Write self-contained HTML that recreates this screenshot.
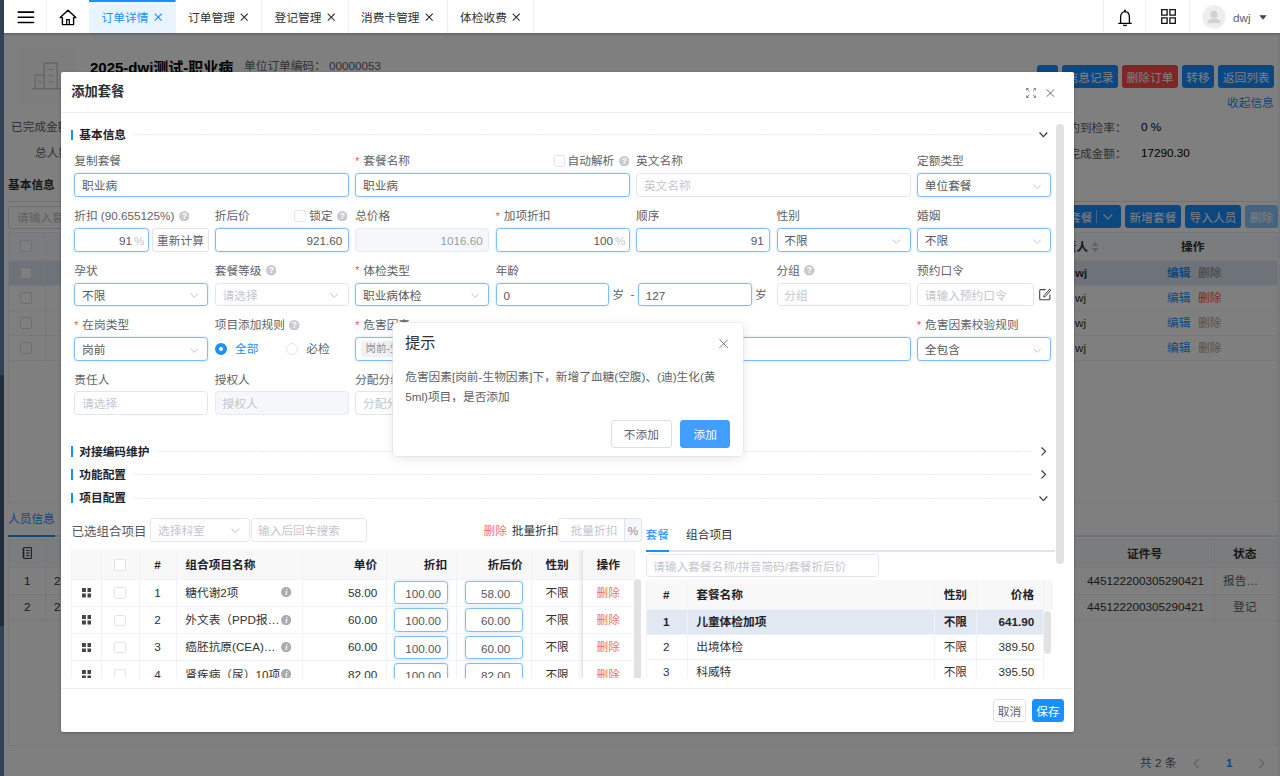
<!DOCTYPE html>
<html lang="zh-CN">
<head>
<meta charset="utf-8">
<title>订单详情</title>
<style>
*{box-sizing:border-box;margin:0;padding:0}
html,body{width:1280px;height:776px;overflow:hidden;background:#fff}
body{font-family:"Liberation Sans","Noto Sans CJK SC",sans-serif;font-size:12px;color:#303133;position:relative}
.abs{position:absolute}
svg{display:block}
/* ---------- sidebar strip ---------- */
#side{position:absolute;left:0;top:0;width:4px;height:776px;background:#304158}
#side i{position:absolute;left:0;top:375px;width:4px;height:251px;background:#1f2d3f}
/* ---------- top bar ---------- */
#top{position:absolute;left:4px;top:0;width:1276px;height:33px;background:#fff;z-index:50;box-shadow:0 1px 1.5px rgba(0,0,0,.22)}
#top .vl{position:absolute;top:0;width:1px;height:32px;background:#f0f0f0}
.tab{position:absolute;top:0;height:33px;line-height:36px;font-size:11.7px;color:#303133;padding-left:12.6px;border-right:1px solid #f0f0f0;white-space:nowrap}
.tab .x{position:absolute;top:13.3px;width:8.4px;height:8.4px}
.tab.on{background:#e8f4ff;color:#1890ff;border-top:2px solid #1890ff;line-height:32px}
.tab.on .x{top:11.3px}
/* ---------- background page ---------- */
#page{position:absolute;left:4px;top:33px;width:1276px;height:743px;background:#fff;overflow:hidden}
#mask{position:absolute;left:4px;top:33px;width:1276px;height:743px;background:rgba(0,0,0,.5);z-index:10}

/* page content (coordinates relative to #page at 4,33) */
#page .t{position:absolute;white-space:nowrap;line-height:16px;font-size:11.7px;color:#303133}
#page .btn{position:absolute;top:32px;height:23px;border-radius:3px;background:#1890ff;color:#fff;font-size:11.7px;line-height:25.6px;text-align:center;white-space:nowrap}
#page .hl{position:absolute;height:1px;background:#ebeef5}
#page .vl2{position:absolute;width:1px;background:#ebeef5}
#page .cb{position:absolute;left:16px;width:12px;height:12px;border:1px solid #dcdfe6;border-radius:2px;background:#fff}
#page .ed{color:#1890ff}
#page .dl{color:#a0a3a8}
/* ---------- modal ---------- */
#modal{position:absolute;left:61px;top:72px;width:1013.4px;height:660px;background:#fff;border-radius:2px;z-index:20;box-shadow:0 1px 3px rgba(0,0,0,.3)}
#modal .mh{position:absolute;left:0;top:0;width:100%;height:41px;border-bottom:1px solid #f0f0f0}
#modal .mh b{position:absolute;left:10.2px;top:11.3px;font-size:13.3px;line-height:18px;color:#2b2e33}
#modal .mf{position:absolute;left:0;top:616px;width:100%;height:41px;border-top:1px solid #f0f0f0}

#modal .lb{position:absolute;white-space:nowrap;font-size:11.7px;line-height:16px;color:#606266}
#modal .rq{color:#ff4d4f;font-style:normal;margin-right:4px;font-size:10.5px;position:relative;top:-0.5px}
#modal .st{position:absolute;white-space:nowrap;font-size:11.7px;line-height:16px;font-weight:bold;color:#1f2329}
#modal .bar{position:absolute;width:2px;height:10.5px;background:#1890ff}
#modal .dot{position:absolute;height:1px;background:repeating-linear-gradient(to right,#e7e9ec 0,#e7e9ec 1.9px,rgba(255,255,255,0) 1.9px,rgba(255,255,255,0) 2.8px)}
#modal .in{position:absolute;border:1px solid #e2e5eb;border-radius:3.5px;background:#fff;font-size:11.7px;color:#55585e;white-space:nowrap;overflow:hidden}
#modal .in.a{border-color:#7dbdff;box-shadow:0 0 2.5px rgba(64,158,255,.35)}
#modal .in.d{background:#f5f7fa;border-color:#e6e9ef;color:#9b9ea4}
#modal .in .ph{color:#c3c6ce}
#modal .in em{position:absolute;right:3.4px;top:0;font-style:normal;color:#c3c6ce}
#modal .bt{position:absolute;border:1px solid #dfe2e8;border-radius:3px;background:#fff;font-size:11.7px;color:#606266;text-align:center;white-space:nowrap}
#modal .cb{position:absolute;width:11.5px;height:11.5px;border:1px solid #e3e6ec;border-radius:2px;background:#fff}
#modal .rd{position:absolute;width:12px;height:12px;border:1px solid #e2e5eb;border-radius:50%;background:#fff}
#modal .rd.on{border:4px solid #1890ff}
#modal .tag{position:absolute;height:15.8px;line-height:15.8px;padding:0 5px;background:#f1f2f4;border-radius:3px;font-size:10.4px;color:#909399;white-space:nowrap}
#modal .sb{position:absolute;border-radius:4px;background:#e2e2e2}

#modal .tb{position:absolute;overflow:hidden}
#modal .tb .th{position:absolute;background:#f8f8f9}
#modal .tb .hi{position:absolute;background:#e1e8f2}
#modal .tb .hl{position:absolute;height:1px;background:#f0f2f7}
#modal .tb .vl{position:absolute;width:1px;background:#f0f2f7}
#modal .tb .fx{position:absolute;width:6px;background:linear-gradient(to right,rgba(0,0,0,0),rgba(0,0,0,.07))}
#modal .tb .c{position:absolute;white-space:nowrap;font-size:11.7px;line-height:16px;color:#303133;padding:0 9px}
#modal .tb .c.b{font-weight:bold;color:#1f2329}
#modal .tb .c.rd2{color:#f56c6c}

/* ---------- message box ---------- */
#dlg{position:absolute;left:393px;top:323px;width:350px;height:133px;background:#fff;border-radius:4px;z-index:30;box-shadow:0 2px 12px rgba(0,0,0,.1),0 0 0 1px rgba(235,238,245,.6)}
#dlg .dt{position:absolute;left:12px;top:9.4px;font-size:15.3px;line-height:22px;color:#303133}
#dlg .dc{position:absolute;left:12.2px;top:44.4px;font-size:11.7px;line-height:20px;color:#606266;white-space:nowrap}
#dlg .db{position:absolute;top:97px;height:27.6px;line-height:27px;border:1px solid #dcdfe6;border-radius:3px;background:#fff;font-size:11.7px;color:#606266;text-align:center}
#dlg .db.pr{background:#409eff;border-color:#409eff;color:#fff}
</style>
</head>
<body>
<div id="side"><i></i></div>

<!-- TOPBAR -->
<div id="top">
  <svg class="abs" style="left:13px;top:11px" width="18" height="13" viewBox="0 0 18 13"><path d="M1.2 1.1H16.6M1.2 6.2H16.6M1.2 11.4H16.6" stroke="#000" stroke-width="1.55" stroke-linecap="round"/></svg>
  <div class="vl" style="left:42px"></div>
  <svg class="abs" style="left:55px;top:9px" width="18" height="17" viewBox="0 0 18 17"><path d="M1.2 8.6L9 1.2L16.8 8.6H14.6V15.6H3.4V8.6Z" fill="none" stroke="#000" stroke-width="1.4" stroke-linejoin="round"/><path d="M7.7 15.6V10.6H10.3V15.6" fill="none" stroke="#000" stroke-width="1.2"/></svg>
  <div class="tab on" style="left:85px;width:87px">订单详情<svg class="x" viewBox="0 0 9 9" style="left:64.6px"><path d="M0.8 0.8L8.2 8.2M8.2 0.8L0.8 8.2" stroke="currentColor" stroke-width="1.15" fill="none"/></svg></div>
  <div class="tab" style="left:171.5px;width:86.5px">订单管理<svg class="x" viewBox="0 0 9 9" style="left:64.6px"><path d="M0.8 0.8L8.2 8.2M8.2 0.8L0.8 8.2" stroke="currentColor" stroke-width="1.15" fill="none"/></svg></div>
  <div class="tab" style="left:258px;width:86.5px">登记管理<svg class="x" viewBox="0 0 9 9" style="left:64.6px"><path d="M0.8 0.8L8.2 8.2M8.2 0.8L0.8 8.2" stroke="currentColor" stroke-width="1.15" fill="none"/></svg></div>
  <div class="tab" style="left:344.5px;width:99px">消费卡管理<svg class="x" viewBox="0 0 9 9" style="left:76.6px"><path d="M0.8 0.8L8.2 8.2M8.2 0.8L0.8 8.2" stroke="currentColor" stroke-width="1.15" fill="none"/></svg></div>
  <div class="tab" style="left:443.5px;width:86.5px">体检收费<svg class="x" viewBox="0 0 9 9" style="left:64.6px"><path d="M0.8 0.8L8.2 8.2M8.2 0.8L0.8 8.2" stroke="currentColor" stroke-width="1.15" fill="none"/></svg></div>
  <div class="vl" style="left:1099px"></div>
  <div class="vl" style="left:1141px"></div>
  <div class="vl" style="left:1185px"></div>
  <svg class="abs" style="left:1114px;top:9px" width="14" height="18" viewBox="0 0 14 18"><path d="M2.6 14.2V8.2C2.6 4.6 4.4 2.6 7 2.6S11.4 4.6 11.4 8.2V14.2" fill="none" stroke="#000" stroke-width="1.3"/><path d="M0.8 14.4H13.2" stroke="#000" stroke-width="1.3" stroke-linecap="round"/><path d="M7 1.2V2.6" stroke="#000" stroke-width="1.6" stroke-linecap="round"/><path d="M5.4 15.8C5.8 17 8.2 17 8.6 15.8" fill="none" stroke="#000" stroke-width="1.2"/></svg>
  <svg class="abs" style="left:1157px;top:9px" width="15" height="15" viewBox="0 0 15 15"><path d="M0.7 0.7H6.1V6.1H0.7ZM8.9 0.7H14.3V6.1H8.9ZM0.7 8.9H6.1V14.3H0.7ZM8.9 8.9H14.3V14.3H8.9Z" fill="none" stroke="#111" stroke-width="1.3"/></svg>
  <svg class="abs" style="left:1198px;top:5px" width="24" height="24" viewBox="0 0 24 24"><circle cx="12" cy="12" r="11.7" fill="#eee"/><circle cx="12" cy="9.4" r="3.6" fill="#d2d2d2"/><path d="M5.5 18.2C6 14.6 9 13.6 12 13.6S18 14.6 18.5 18.2Z" fill="#d2d2d2"/></svg>
  <div class="abs" style="left:1229px;top:10px;font-size:11.7px;line-height:15px;color:#606266">dwj</div>
  <svg class="abs" style="left:1255px;top:15px" width="8" height="5" viewBox="0 0 8 5"><path d="M0.3 0.3H7.7L4 4.7Z" fill="#444"/></svg>
</div>

<!-- PAGE -->
<div id="page">
  <div class="abs" style="left:1273.6px;top:0;width:3px;height:743px;background:#f0f2f5"></div>
  <div class="abs" style="left:0;top:0;width:1276px;height:3.4px;background:#f2f3f6"></div>
  <div class="abs" style="left:14px;top:14px;width:58px;height:58px;background:#fafbfc"></div>
  <svg class="abs" style="left:28px;top:29px" width="30" height="28" viewBox="0 0 30 28"><path d="M0 26.6H30M3.2 26.6V13.2H12.2M12.2 26.6V1H25.2V26.6" fill="none" stroke="#c6cbd6" stroke-width="1.3"/><path d="M16.6 7.6H20.8M16.6 13.6H20.8M16.6 19.6H20.8M5.8 19.6H9.8" stroke="#c6cbd6" stroke-width="1.3"/></svg>
  <div class="t" style="left:86px;top:24.5px;font-size:15px;line-height:20px;font-weight:bold;color:#000">2025-dwj测试-职业病</div>
  <div class="t" style="left:240px;top:25px;color:#606266">单位订单编码：&nbsp;00000053</div>
  <div class="btn" style="left:1033px;width:21px"></div>
  <div class="btn" style="left:1058px;width:56px">信息记录</div>
  <div class="btn" style="left:1118px;width:56px;background:#ff4d4f">删除订单</div>
  <div class="btn" style="left:1178px;width:32px">转移</div>
  <div class="btn" style="left:1214px;width:56.3px">返回列表</div>
  <div class="t ed" style="left:1223px;top:62px">收起信息</div>
  <div class="t" style="left:7px;top:86px;color:#606266">已完成金额：</div>
  <div class="t" style="left:31px;top:112px;color:#606266">总人数：</div>
  <div class="t" style="left:1052.5px;top:86.6px;color:#606266">预约到检率：</div>
  <div class="t" style="left:1137px;top:86px;color:#000">0 %</div>
  <div class="t" style="left:1052.5px;top:112.6px;color:#606266">已完成金额：</div>
  <div class="t" style="left:1137px;top:112px;color:#000">17290.30</div>
  <div class="t" style="left:4px;top:144px;font-weight:bold;color:#303133">基本信息</div>
  <div class="hl" style="left:4px;top:168px;width:1270px;background:#dfe4ed"></div>
  <div class="abs" style="left:4px;top:173px;width:150px;height:23px;border:1px solid #dcdfe6;border-radius:3px"></div>
  <div class="t" style="left:13px;top:177px;color:#c0c4cc">请输入套餐名称</div>
  <div class="btn" style="left:1040px;top:172px;width:77px;text-align:left;padding-left:25px">套餐<i style="position:absolute;left:51.5px;top:5px;width:1px;height:13px;background:rgba(255,255,255,.5)"></i><svg class="abs" style="left:59.4px;top:9px" width="9.8" height="5.8" viewBox="0 0 9.8 5.8"><path d="M0.6 0.6L4.9 5L9.2 0.6" fill="none" stroke="#fff" stroke-width="1.1"/></svg></div>
  <div class="btn" style="left:1121px;top:172px;width:56px">新增套餐</div>
  <div class="btn" style="left:1181px;top:172px;width:56px">导入人员</div>
  <div class="btn" style="left:1241px;top:172px;width:33px;background:#8cc8ff">删除</div>
  <!-- table 1 -->
  <div class="abs" style="left:4px;top:199px;width:1270px;height:271px;border:1px solid #ebeef5"></div>
  <div class="abs" style="left:5px;top:200px;width:1268px;height:28px;background:#f7f8fa;border-bottom:1px solid #eef0f5"></div>
  <div class="cb" style="top:207px"></div>
  <div class="t" style="left:1049px;top:206px;font-weight:bold">负责人</div>
  <svg class="abs" style="left:1087px;top:208px" width="8" height="12" viewBox="0 0 8 12"><path d="M0.3 5L4 0.8L7.7 5ZM0.3 7L4 11.2L7.7 7Z" fill="#c0c4cc"/></svg>
  <div class="t" style="left:1177px;top:206px;font-weight:bold">操作</div>
<div class="abs" style="left:5px;top:228px;width:1268px;height:25px;background:#dde7f5;border-bottom:1px solid #eef0f5"></div><div class="cb" style="top:234px"></div><div class="t" style="left:1071px;top:232px;font-weight:bold">wj</div><div class="t ed" style="left:1163px;top:232px;font-weight:bold">编辑</div><div class="t" style="left:1194px;top:232px;color:#a0a3a8;font-weight:bold">删除</div>
<div class="abs" style="left:5px;top:253px;width:1268px;height:25px;border-bottom:1px solid #eef0f5"></div><div class="cb" style="top:259px"></div><div class="t" style="left:1071px;top:257px">wj</div><div class="t ed" style="left:1163px;top:257px">编辑</div><div class="t" style="left:1194px;top:257px;color:#ff4d4f">删除</div>
<div class="abs" style="left:5px;top:278px;width:1268px;height:25px;border-bottom:1px solid #eef0f5"></div><div class="cb" style="top:284px"></div><div class="t" style="left:1071px;top:282px">wj</div><div class="t ed" style="left:1163px;top:282px">编辑</div><div class="t" style="left:1194px;top:282px;color:#a0a3a8">删除</div>
<div class="abs" style="left:5px;top:303px;width:1268px;height:25px;border-bottom:1px solid #eef0f5"></div><div class="cb" style="top:309px"></div><div class="t" style="left:1071px;top:307px">wj</div><div class="t ed" style="left:1163px;top:307px">编辑</div><div class="t" style="left:1194px;top:307px;color:#a0a3a8">删除</div>
  <div class="vl2" style="left:41px;top:200px;height:129px"></div>
  <!-- tab 2 -->
  <div class="t ed" style="left:4px;top:478px;color:#1890ff">人员信息</div>
  <div class="hl" style="left:4px;top:502px;width:1270px;height:2px;background:#dfe4ed"></div>
  <div class="hl" style="left:4px;top:502px;width:47px;height:2px;background:#1890ff"></div>
  <!-- table 2 -->
  <div class="abs" style="left:4px;top:506px;width:1270px;height:207px;border:1px solid #ebeef5"></div>
  <div class="abs" style="left:5px;top:507px;width:1268px;height:28px;background:#f7f8fa;border-bottom:1px solid #eef0f5"></div>
  <div class="abs" style="left:5px;top:535px;width:1268px;height:27px;border-bottom:1px solid #eef0f5"></div>
  <div class="abs" style="left:5px;top:562px;width:1268px;height:26px;border-bottom:1px solid #eef0f5"></div>
  <div class="vl2" style="left:41px;top:507px;height:81px"></div>
  <div class="vl2" style="left:1210px;top:507px;height:81px"></div>
  <svg class="abs" style="left:18px;top:514px" width="10" height="12" viewBox="0 0 10 12"><path d="M1.6 0.6H9.4V11.4H1.6ZM0 3H2.6M0 6H2.6M0 9H2.6M4.2 3.4H7.6M4.2 6H7.6M4.2 8.6H7.6" fill="none" stroke="#303133" stroke-width="1"/></svg>
  <div class="t" style="left:1123px;top:513px;font-weight:bold">证件号</div>
  <div class="t" style="left:1229px;top:513px;font-weight:bold">状态</div>
  <div class="t" style="left:20px;top:540px">1</div><div class="t" style="left:50px;top:540px">2</div>
  <div class="t" style="left:20px;top:566px">2</div><div class="t" style="left:50px;top:566px">2</div>
  <div class="t" style="left:1083px;top:540px">445122200305290421</div>
  <div class="t" style="left:1083px;top:566px">445122200305290421</div>
  <div class="t" style="left:1219px;top:540px;color:#606266">报告…</div>
  <div class="t" style="left:1229px;top:566px;color:#606266">登记</div>
  <!-- pagination -->
  <div class="t" style="left:1136px;top:722px;color:#606266">共 2 条</div>
  <svg class="abs" style="left:1189.4px;top:725.4px" width="7" height="11" viewBox="0 0 7 11"><path d="M5.6 0.8L1.2 5.5L5.6 10.2" fill="none" stroke="#c0c4cc" stroke-width="1.2"/></svg>
  <div class="t" style="left:1222px;top:722px;color:#1890ff;font-weight:bold">1</div>
  <svg class="abs" style="left:1254px;top:725px" width="7" height="11" viewBox="0 0 7 11"><path d="M1.4 0.8L5.8 5.5L1.4 10.2" fill="none" stroke="#c0c4cc" stroke-width="1.2"/></svg>
</div>

<div id="mask"></div>

<!-- MODAL -->
<div id="modal">
  <div class="mh"><b>添加套餐</b>
    <svg class="abs" style="left:965px;top:16px" width="10.4" height="10" viewBox="0 0 10.4 10"><path d="M0.6 0.6L3.4 3.2M0.6 0.6H2.8M0.6 0.6V2.6M9.8 0.6L7 3.2M9.8 0.6H7.6M9.8 0.6V2.6M0.6 9.4L3.4 6.8M0.6 9.4H2.8M0.6 9.4V7.4M9.8 9.4L7 6.8M9.8 9.4H7.6M9.8 9.4V7.4" fill="none" stroke="#74777d" stroke-width="0.9"/></svg>
    <svg class="abs" style="left:985.4px;top:17px" width="8.8" height="8.2" viewBox="0 0 8.8 8.2"><path d="M0.4 0.3L8.4 7.9M8.4 0.3L0.4 7.9" fill="none" stroke="#606266" stroke-width="0.9"/></svg>
  </div>
  <div class="mb" id="mb">
<!--FORM-START-->
<i class="bar" style="left:10.25px;top:57.5px"></i>
<div class="st" style="left:18.3px;top:55.1px">基本信息</div>
<i class="dot" style="left:71.5px;top:62.2px;width:898.5px"></i>
<svg class="abs" style="left:978.3px;top:60.4px" width="8.8" height="5.2" viewBox="0 0 8.8 5.2"><path d="M0.5 0.5L4.4 4.6000000000000005L8.3 0.5" fill="none" stroke="#303133" stroke-width="1.1"/></svg>
<div class="lb" style="left:13.25px;top:81.4px;color:#606266">复制套餐</div>
<div class="in a" style="left:13.25px;top:101px;width:274.56px;height:23.75px;line-height:24.15px;text-align:left;padding:0 6.8px;"><span class="">职业病</span></div>
<div class="lb" style="left:294.17px;top:81.4px;color:#606266"><i class="rq">*</i>套餐名称</div>
<div class="in a" style="left:294.17px;top:101px;width:274.56px;height:23.75px;line-height:24.15px;text-align:left;padding:0 6.8px;"><span class="">职业病</span></div>
<i class="cb" style="left:492.5px;top:83.4px"></i>
<div class="lb" style="left:506.5px;top:81.4px;color:#606266">自动解析</div>
<svg class="abs" style="left:557.7px;top:83.95px" width="10.5" height="10.5" viewBox="0 0 12 12"><circle cx="6" cy="6" r="6" fill="#c8cad0"/><text x="6" y="9.5" font-size="9.8" font-weight="bold" text-anchor="middle" fill="#fff" font-family="Liberation Sans, sans-serif">?</text></svg>
<div class="lb" style="left:575.09px;top:81.4px;color:#606266">英文名称</div>
<div class="in" style="left:575.09px;top:101px;width:274.56px;height:23.75px;line-height:24.15px;text-align:left;padding:0 6.8px;"><span class="ph">英文名称</span></div>
<div class="lb" style="left:856.01px;top:81.4px;color:#606266">定额类型</div>
<div class="in a" style="left:856.01px;top:101px;width:134.1px;height:23.75px;line-height:24.15px;text-align:left;padding:0 6.8px;"><span class="">单位套餐</span></div>
<svg class="abs" style="left:971.51px;top:111.78px" width="8.5" height="5" viewBox="0 0 8.5 5"><path d="M0.5 0.5L4.25 4.4L8.0 0.5" fill="none" stroke="#c0c4cc" stroke-width="1"/></svg>
<div class="lb" style="left:13.25px;top:136.1px;color:#606266">折扣 (90.655125%)</div>
<svg class="abs" style="left:117.6px;top:138.65px" width="10.5" height="10.5" viewBox="0 0 12 12"><circle cx="6" cy="6" r="6" fill="#c8cad0"/><text x="6" y="9.5" font-size="9.8" font-weight="bold" text-anchor="middle" fill="#fff" font-family="Liberation Sans, sans-serif">?</text></svg>
<div class="in a" style="left:13.25px;top:156px;width:74.5px;height:23.75px;line-height:24.15px;text-align:right;padding:0 15.8px;"><span class="">91</span><em>%</em></div>
<div class="bt" style="left:91.2px;top:156px;width:56.6px;height:23.75px;line-height:24.6px">重新计算</div>
<div class="lb" style="left:153.71px;top:136.1px;color:#606266">折后价</div>
<i class="cb" style="left:233.2px;top:138.4px"></i>
<div class="lb" style="left:248.3px;top:136.1px;color:#606266">锁定</div>
<svg class="abs" style="left:275.8px;top:138.65px" width="10.5" height="10.5" viewBox="0 0 12 12"><circle cx="6" cy="6" r="6" fill="#c8cad0"/><text x="6" y="9.5" font-size="9.8" font-weight="bold" text-anchor="middle" fill="#fff" font-family="Liberation Sans, sans-serif">?</text></svg>
<div class="in a" style="left:153.71px;top:156px;width:134.1px;height:23.75px;line-height:24.15px;text-align:right;padding:0 5.5px;"><span class="">921.60</span></div>
<div class="lb" style="left:294.17px;top:136.1px;color:#606266">总价格</div>
<div class="in d" style="left:294.17px;top:156px;width:134.1px;height:23.75px;line-height:24.15px;text-align:right;padding:0 5.5px;"><span class="">1016.60</span></div>
<div class="lb" style="left:434.63px;top:136.1px;color:#606266"><i class="rq">*</i>加项折扣</div>
<div class="in a" style="left:434.63px;top:156px;width:134.1px;height:23.75px;line-height:24.15px;text-align:right;padding:0 15.8px;"><span class="">100</span><em>%</em></div>
<div class="lb" style="left:575.09px;top:136.1px;color:#606266">顺序</div>
<div class="in a" style="left:575.09px;top:156px;width:134.1px;height:23.75px;line-height:24.15px;text-align:right;padding:0 5.5px;"><span class="">91</span></div>
<div class="lb" style="left:715.55px;top:136.1px;color:#606266">性别</div>
<div class="in a" style="left:715.55px;top:156px;width:134.1px;height:23.75px;line-height:24.15px;text-align:left;padding:0 6.8px;"><span class="">不限</span></div>
<svg class="abs" style="left:831.05px;top:166.78px" width="8.5" height="5" viewBox="0 0 8.5 5"><path d="M0.5 0.5L4.25 4.4L8.0 0.5" fill="none" stroke="#c0c4cc" stroke-width="1"/></svg>
<div class="lb" style="left:856.01px;top:136.1px;color:#606266">婚姻</div>
<div class="in a" style="left:856.01px;top:156px;width:134.1px;height:23.75px;line-height:24.15px;text-align:left;padding:0 6.8px;"><span class="">不限</span></div>
<svg class="abs" style="left:971.51px;top:166.78px" width="8.5" height="5" viewBox="0 0 8.5 5"><path d="M0.5 0.5L4.25 4.4L8.0 0.5" fill="none" stroke="#c0c4cc" stroke-width="1"/></svg>
<div class="lb" style="left:13.25px;top:190.9px;color:#606266">孕状</div>
<div class="in a" style="left:13.25px;top:210.5px;width:134.1px;height:23.75px;line-height:24.15px;text-align:left;padding:0 6.8px;"><span class="">不限</span></div>
<svg class="abs" style="left:128.75px;top:221.27px" width="8.5" height="5" viewBox="0 0 8.5 5"><path d="M0.5 0.5L4.25 4.4L8.0 0.5" fill="none" stroke="#c0c4cc" stroke-width="1"/></svg>
<div class="lb" style="left:153.71px;top:190.9px;color:#606266">套餐等级</div>
<svg class="abs" style="left:204.6px;top:193.45px" width="10.5" height="10.5" viewBox="0 0 12 12"><circle cx="6" cy="6" r="6" fill="#c8cad0"/><text x="6" y="9.5" font-size="9.8" font-weight="bold" text-anchor="middle" fill="#fff" font-family="Liberation Sans, sans-serif">?</text></svg>
<div class="in" style="left:153.71px;top:210.5px;width:134.1px;height:23.75px;line-height:24.15px;text-align:left;padding:0 6.8px;"><span class="ph">请选择</span></div>
<svg class="abs" style="left:269.21px;top:221.27px" width="8.5" height="5" viewBox="0 0 8.5 5"><path d="M0.5 0.5L4.25 4.4L8.0 0.5" fill="none" stroke="#c0c4cc" stroke-width="1"/></svg>
<div class="lb" style="left:294.17px;top:190.9px;color:#606266"><i class="rq">*</i>体检类型</div>
<div class="in a" style="left:294.17px;top:210.5px;width:134.1px;height:23.75px;line-height:24.15px;text-align:left;padding:0 6.8px;"><span class="">职业病体检</span></div>
<svg class="abs" style="left:409.67px;top:221.27px" width="8.5" height="5" viewBox="0 0 8.5 5"><path d="M0.5 0.5L4.25 4.4L8.0 0.5" fill="none" stroke="#c0c4cc" stroke-width="1"/></svg>
<div class="lb" style="left:434.63px;top:190.9px;color:#606266">年龄</div>
<div class="in a" style="left:434.63px;top:210.5px;width:113.8px;height:23.75px;line-height:24.15px;text-align:left;padding:0 6.8px;"><span class="">0</span></div>
<div class="lb" style="left:551.3px;top:214.8px;color:#606266">岁</div>
<div class="lb" style="left:569.6px;top:214.4px;color:#606266">-</div>
<div class="in a" style="left:577px;top:210.5px;width:113.8px;height:23.75px;line-height:24.15px;text-align:left;padding:0 6.8px;"><span class="">127</span></div>
<div class="lb" style="left:694px;top:214.8px;color:#606266">岁</div>
<div class="lb" style="left:715.55px;top:190.9px;color:#606266">分组</div>
<svg class="abs" style="left:743px;top:193.45px" width="10.5" height="10.5" viewBox="0 0 12 12"><circle cx="6" cy="6" r="6" fill="#c8cad0"/><text x="6" y="9.5" font-size="9.8" font-weight="bold" text-anchor="middle" fill="#fff" font-family="Liberation Sans, sans-serif">?</text></svg>
<div class="in" style="left:715.55px;top:210.5px;width:134.1px;height:23.75px;line-height:24.15px;text-align:left;padding:0 6.8px;"><span class="ph">分组</span></div>
<div class="lb" style="left:856.01px;top:190.9px;color:#606266">预约口令</div>
<div class="in" style="left:856.01px;top:210.5px;width:117.3px;height:23.75px;line-height:24.15px;text-align:left;padding:0 6.8px;"><span class="ph">请输入预约口令</span></div>
<svg class="abs" style="left:978px;top:216.4px" width="12.5" height="12.5" viewBox="0 0 12.5 12.5"><path d="M6.6 1.6H1.8Q0.7 1.6 0.7 2.7V10.7Q0.7 11.8 1.8 11.8H9.8Q10.9 11.8 10.9 10.7V6.4" fill="none" stroke="#444" stroke-width="1.1"/><path d="M5 7.6L10.6 1.2L11.8 2.2L6.3 8.5L4.7 8.9Z" fill="none" stroke="#444" stroke-width="1" stroke-linejoin="round"/></svg>
<div class="lb" style="left:13.25px;top:245.4px;color:#606266"><i class="rq">*</i>在岗类型</div>
<div class="in a" style="left:13.25px;top:265px;width:134.1px;height:23.75px;line-height:24.15px;text-align:left;padding:0 6.8px;"><span class="">岗前</span></div>
<svg class="abs" style="left:128.75px;top:275.77px" width="8.5" height="5" viewBox="0 0 8.5 5"><path d="M0.5 0.5L4.25 4.4L8.0 0.5" fill="none" stroke="#c0c4cc" stroke-width="1"/></svg>
<div class="lb" style="left:153.71px;top:245.4px;color:#606266">项目添加规则</div>
<svg class="abs" style="left:228px;top:247.95px" width="10.5" height="10.5" viewBox="0 0 12 12"><circle cx="6" cy="6" r="6" fill="#c8cad0"/><text x="6" y="9.5" font-size="9.8" font-weight="bold" text-anchor="middle" fill="#fff" font-family="Liberation Sans, sans-serif">?</text></svg>
<i class="rd on" style="left:154px;top:270.9px"></i>
<div class="lb" style="left:174px;top:269.4px;color:#1890ff">全部</div>
<i class="rd" style="left:225.2px;top:270.9px"></i>
<div class="lb" style="left:245.2px;top:269.4px;color:#606266">必检</div>
<div class="lb" style="left:294.17px;top:245.4px;color:#606266"><i class="rq">*</i>危害因素</div>
<div class="in a" style="left:294.17px;top:265px;width:555.48px;height:23.75px;line-height:24.15px;text-align:left;padding:0 6.8px;"></div>
<div class="tag" style="left:299.6px;top:269.2px">岗前-生物因素</div>
<div class="lb" style="left:856.01px;top:245.4px;color:#606266"><i class="rq">*</i>危害因素校验规则</div>
<div class="in a" style="left:856.01px;top:265px;width:134.1px;height:23.75px;line-height:24.15px;text-align:left;padding:0 6.8px;"><span class="">全包含</span></div>
<svg class="abs" style="left:971.51px;top:275.77px" width="8.5" height="5" viewBox="0 0 8.5 5"><path d="M0.5 0.5L4.25 4.4L8.0 0.5" fill="none" stroke="#c0c4cc" stroke-width="1"/></svg>
<div class="lb" style="left:13.25px;top:299.9px;color:#606266">责任人</div>
<div class="in" style="left:13.25px;top:319.3px;width:134.1px;height:23.75px;line-height:24.15px;text-align:left;padding:0 6.8px;"><span class="ph">请选择</span></div>
<div class="lb" style="left:153.71px;top:299.9px;color:#606266">授权人</div>
<div class="in d" style="left:153.71px;top:319.3px;width:134.1px;height:23.75px;line-height:24.15px;text-align:left;padding:0 6.8px;"><span class="ph">授权人</span></div>
<div class="lb" style="left:294.17px;top:299.9px;color:#606266">分配分组</div>
<div class="in" style="left:294.17px;top:319.3px;width:134.1px;height:23.75px;line-height:24.15px;text-align:left;padding:0 6.8px;"><span class="ph">分配分组</span></div>
<i class="bar" style="left:10.25px;top:374.2px"></i>
<div class="st" style="left:18.3px;top:371.8px">对接编码维护</div>
<i class="dot" style="left:95px;top:378.9px;width:875px"></i>
<svg class="abs" style="left:979.6px;top:375px" width="5.2" height="8.8" viewBox="0 0 5.2 8.8"><path d="M0.5 0.5L4.6 4.4L0.5 8.3" fill="none" stroke="#303133" stroke-width="1.1"/></svg>
<i class="bar" style="left:10.25px;top:397.4px"></i>
<div class="st" style="left:18.3px;top:395px">功能配置</div>
<i class="dot" style="left:72px;top:402.1px;width:898px"></i>
<svg class="abs" style="left:979.6px;top:398.2px" width="5.2" height="8.8" viewBox="0 0 5.2 8.8"><path d="M0.5 0.5L4.6 4.4L0.5 8.3" fill="none" stroke="#303133" stroke-width="1.1"/></svg>
<i class="bar" style="left:10.25px;top:420.8px"></i>
<div class="st" style="left:18.3px;top:418.4px">项目配置</div>
<i class="dot" style="left:72px;top:425.5px;width:898px"></i>
<svg class="abs" style="left:978.3px;top:423.7px" width="8.8" height="5.2" viewBox="0 0 8.8 5.2"><path d="M0.5 0.5L4.4 4.6000000000000005L8.3 0.5" fill="none" stroke="#303133" stroke-width="1.1"/></svg>
<i class="sb" style="left:995.3px;top:51.8px;width:7.6px;height:440px"></i>
<!--FORM-END-->
<!--TABLES-START-->
<div class="lb" style="left:10.5px;top:450.6px;font-size:12.5px;line-height:18px;color:#55585e">已选组合项目</div>
<div class="in" style="left:89px;top:446px;width:100px;height:23.75px;line-height:24.95px;padding:0 7px;"><span class="ph">选择科室</span></div>
<svg class="abs" style="left:170.3px;top:456.1px" width="8.5" height="5" viewBox="0 0 8.5 5"><path d="M0.5 0.5L4.25 4.4L8.0 0.5" fill="none" stroke="#c0c4cc" stroke-width="1"/></svg>
<div class="in" style="left:189.5px;top:446px;width:116.5px;height:23.75px;line-height:24.95px;padding:0 6.5px;"><span class="ph">输入后回车搜索</span></div>
<div class="lb" style="left:422.5px;top:450.8px;color:#f56c6c">删除</div>
<div class="lb" style="left:450.7px;top:450.8px;color:#303133">批量折扣</div>
<div class="in" style="left:497.2px;top:446px;width:66.6px;height:23.75px;line-height:24.95px;padding:0 11.4px;border-radius:3.5px 0 0 3.5px"><span class="ph">批量折扣</span></div>
<div class="in" style="left:563.3px;top:446px;width:17.5px;height:23.75px;line-height:23px;padding:0;text-align:center;background:#f5f7fa;border-radius:0 3.5px 3.5px 0;color:#8d9095;border-color:#dfe3ea">%</div>
<div class="tb" style="left:10.25px;top:478px;width:570.25px;height:128.4px">
<div class="th" style="left:0;top:0;width:562.75px;height:29.25px"></div>
<i class="hl" style="left:0;top:28.75px;width:562.75px"></i>
<i class="hl" style="left:0;top:56px;width:562.75px"></i>
<i class="hl" style="left:0;top:83.25px;width:562.75px"></i>
<i class="hl" style="left:0;top:110.4px;width:562.75px"></i>
<i class="vl" style="left:0px;top:0;height:140px"></i>
<i class="vl" style="left:29.5px;top:0;height:140px"></i>
<i class="vl" style="left:67.25px;top:0;height:140px"></i>
<i class="vl" style="left:104.5px;top:0;height:140px"></i>
<i class="vl" style="left:230.75px;top:0;height:140px"></i>
<i class="vl" style="left:314.5px;top:0;height:140px"></i>
<i class="vl" style="left:384.5px;top:0;height:140px"></i>
<i class="vl" style="left:460px;top:0;height:140px"></i>
<i class="vl" style="left:510.75px;top:0;height:140px"></i>
<i class="vl" style="left:562.25px;top:0;height:29.25px"></i>
<i class="fx" style="left:505.25px;top:0;height:140px"></i>
<i class="cb" style="left:42.95px;top:9px"></i>
<div class="c b" style="left:67.75px;top:7px;width:37.25px;text-align:center;">#</div>
<div class="c b" style="left:105px;top:7px;">组合项目名称</div>
<div class="c b" style="left:231.25px;top:7px;width:83.75px;text-align:right;">单价</div>
<div class="c b" style="left:315px;top:7px;width:70px;text-align:right;">折扣</div>
<div class="c b" style="left:385px;top:7px;width:75.5px;text-align:right;">折后价</div>
<div class="c b" style="left:460.5px;top:7px;width:50.75px;text-align:center;">性别</div>
<div class="c b" style="left:511.25px;top:7px;width:51.5px;text-align:center;">操作</div>
<svg class="abs" style="left:10.75px;top:38.15px" width="9.4" height="9.4" viewBox="0 0 9.4 9.4"><path d="M0 0H3.9V3.9H0ZM5.5 0H9.4V3.9H5.5ZM0 5.5H3.9V9.4H0ZM5.5 5.5H9.4V9.4H5.5Z" fill="#444"/></svg>
<i class="cb" style="left:42.95px;top:37.25px"></i>
<div class="c " style="left:67.75px;top:34.85px;width:37.25px;text-align:center;">1</div>
<div class="c " style="left:105px;top:34.85px;">糖代谢2项</div>
<svg class="abs" style="left:209.95px;top:37.45px" width="10.2" height="10.2" viewBox="0 0 12 12"><circle cx="6" cy="6" r="6" fill="#a9abb0"/><text x="6.2" y="9.6" font-size="9.5" font-style="italic" font-weight="bold" text-anchor="middle" fill="#fff" font-family="Liberation Serif, serif">i</text></svg>
<div class="c " style="left:231.25px;top:34.85px;width:83.75px;text-align:right;">58.00</div>
<div class="in a" style="left:323.05px;top:31.15px;width:54px;height:23.2px;line-height:23.2px;padding:0 0 0 3.6px;text-align:center">100.00</div>
<div class="in a" style="left:393.75px;top:31.15px;width:58.3px;height:23.2px;line-height:23.2px;padding:0 0 0 3px;text-align:center">58.00</div>
<div class="c " style="left:460.5px;top:34.85px;width:50.75px;text-align:center;">不限</div>
<div class="c rd2" style="left:511.25px;top:34.85px;width:51.5px;text-align:center;">删除</div>
<svg class="abs" style="left:10.75px;top:65.4px" width="9.4" height="9.4" viewBox="0 0 9.4 9.4"><path d="M0 0H3.9V3.9H0ZM5.5 0H9.4V3.9H5.5ZM0 5.5H3.9V9.4H0ZM5.5 5.5H9.4V9.4H5.5Z" fill="#444"/></svg>
<i class="cb" style="left:42.95px;top:64.5px"></i>
<div class="c " style="left:67.75px;top:62.1px;width:37.25px;text-align:center;">2</div>
<div class="c " style="left:105px;top:62.1px;">外文表（PPD报…</div>
<svg class="abs" style="left:209.95px;top:64.7px" width="10.2" height="10.2" viewBox="0 0 12 12"><circle cx="6" cy="6" r="6" fill="#a9abb0"/><text x="6.2" y="9.6" font-size="9.5" font-style="italic" font-weight="bold" text-anchor="middle" fill="#fff" font-family="Liberation Serif, serif">i</text></svg>
<div class="c " style="left:231.25px;top:62.1px;width:83.75px;text-align:right;">60.00</div>
<div class="in a" style="left:323.05px;top:58.4px;width:54px;height:23.2px;line-height:23.2px;padding:0 0 0 3.6px;text-align:center">100.00</div>
<div class="in a" style="left:393.75px;top:58.4px;width:58.3px;height:23.2px;line-height:23.2px;padding:0 0 0 3px;text-align:center">60.00</div>
<div class="c " style="left:460.5px;top:62.1px;width:50.75px;text-align:center;">不限</div>
<div class="c rd2" style="left:511.25px;top:62.1px;width:51.5px;text-align:center;">删除</div>
<svg class="abs" style="left:10.75px;top:92.65px" width="9.4" height="9.4" viewBox="0 0 9.4 9.4"><path d="M0 0H3.9V3.9H0ZM5.5 0H9.4V3.9H5.5ZM0 5.5H3.9V9.4H0ZM5.5 5.5H9.4V9.4H5.5Z" fill="#444"/></svg>
<i class="cb" style="left:42.95px;top:91.75px"></i>
<div class="c " style="left:67.75px;top:89.35px;width:37.25px;text-align:center;">3</div>
<div class="c " style="left:105px;top:89.35px;">癌胚抗原(CEA)…</div>
<svg class="abs" style="left:209.95px;top:91.95px" width="10.2" height="10.2" viewBox="0 0 12 12"><circle cx="6" cy="6" r="6" fill="#a9abb0"/><text x="6.2" y="9.6" font-size="9.5" font-style="italic" font-weight="bold" text-anchor="middle" fill="#fff" font-family="Liberation Serif, serif">i</text></svg>
<div class="c " style="left:231.25px;top:89.35px;width:83.75px;text-align:right;">60.00</div>
<div class="in a" style="left:323.05px;top:85.65px;width:54px;height:23.2px;line-height:23.2px;padding:0 0 0 3.6px;text-align:center">100.00</div>
<div class="in a" style="left:393.75px;top:85.65px;width:58.3px;height:23.2px;line-height:23.2px;padding:0 0 0 3px;text-align:center">60.00</div>
<div class="c " style="left:460.5px;top:89.35px;width:50.75px;text-align:center;">不限</div>
<div class="c rd2" style="left:511.25px;top:89.35px;width:51.5px;text-align:center;">删除</div>
<svg class="abs" style="left:10.75px;top:119.8px" width="9.4" height="9.4" viewBox="0 0 9.4 9.4"><path d="M0 0H3.9V3.9H0ZM5.5 0H9.4V3.9H5.5ZM0 5.5H3.9V9.4H0ZM5.5 5.5H9.4V9.4H5.5Z" fill="#444"/></svg>
<i class="cb" style="left:42.95px;top:118.9px"></i>
<div class="c " style="left:67.75px;top:116.5px;width:37.25px;text-align:center;">4</div>
<div class="c " style="left:105px;top:116.5px;">肾疾病（尿）10项</div>
<svg class="abs" style="left:209.95px;top:119.1px" width="10.2" height="10.2" viewBox="0 0 12 12"><circle cx="6" cy="6" r="6" fill="#a9abb0"/><text x="6.2" y="9.6" font-size="9.5" font-style="italic" font-weight="bold" text-anchor="middle" fill="#fff" font-family="Liberation Serif, serif">i</text></svg>
<div class="c " style="left:231.25px;top:116.5px;width:83.75px;text-align:right;">82.00</div>
<div class="in a" style="left:323.05px;top:112.8px;width:54px;height:23.2px;line-height:23.2px;padding:0 0 0 3.6px;text-align:center">100.00</div>
<div class="in a" style="left:393.75px;top:112.8px;width:58.3px;height:23.2px;line-height:23.2px;padding:0 0 0 3px;text-align:center">82.00</div>
<div class="c " style="left:460.5px;top:116.5px;width:50.75px;text-align:center;">不限</div>
<div class="c rd2" style="left:511.25px;top:116.5px;width:51.5px;text-align:center;">删除</div>
<i class="sb" style="left:563.15px;top:29.25px;width:6.8px;height:120px;border-radius:3.4px"></i>
</div>
<div class="lb" style="left:584.6px;top:454.6px;color:#1890ff">套餐</div>
<div class="lb" style="left:625px;top:454.6px;color:#303133">组合项目</div>
<i class="abs" style="left:584.5px;top:478.4px;width:409.5px;height:1.3px;background:#dfe4ed"></i>
<i class="abs" style="left:584.5px;top:477.8px;width:23.3px;height:2px;background:#1890ff"></i>
<div class="in" style="left:584.5px;top:482px;width:233.8px;height:23px;line-height:24.2px;padding:0 6.5px;"><span class="ph">请输入套餐名称/拼音简码/套餐折后价</span></div>
<div class="tb" style="left:584.5px;top:508px;width:406.25px;height:98.4px">
<div class="th" style="left:0;top:0;width:406.25px;height:29.6px"></div>
<div class="hi" style="left:0;top:29.6px;width:397.75px;height:24.9px"></div>
<i class="hl" style="left:0;top:29.1px;width:397.75px"></i>
<i class="hl" style="left:0;top:54px;width:397.75px"></i>
<i class="hl" style="left:0;top:78.8px;width:397.75px"></i>
<i class="vl" style="left:0px;top:0;height:120px"></i>
<i class="vl" style="left:41.2px;top:0;height:120px"></i>
<i class="vl" style="left:288.5px;top:0;height:120px"></i>
<i class="vl" style="left:330.25px;top:0;height:120px"></i>
<i class="vl" style="left:397.25px;top:0;height:120px"></i>
<i class="vl" style="left:405.25px;top:0;height:29.6px"></i>
<div class="c b" style="left:0px;top:6.8px;width:41.7px;text-align:center;">#</div>
<div class="c b" style="left:41.7px;top:6.8px;">套餐名称</div>
<div class="c b" style="left:289px;top:6.8px;width:41.75px;text-align:center;">性别</div>
<div class="c b" style="left:330.75px;top:6.8px;width:67px;text-align:right;">价格</div>
<div class="c b" style="left:0px;top:34.25px;width:41.7px;text-align:center;">1</div>
<div class="c b" style="left:41.7px;top:34.25px;">儿童体检加项</div>
<div class="c b" style="left:289px;top:34.25px;width:41.75px;text-align:center;">不限</div>
<div class="c b" style="left:330.75px;top:34.25px;width:67px;text-align:right;">641.90</div>
<div class="c " style="left:0px;top:59.1px;width:41.7px;text-align:center;">2</div>
<div class="c " style="left:41.7px;top:59.1px;">出境体检</div>
<div class="c " style="left:289px;top:59.1px;width:41.75px;text-align:center;">不限</div>
<div class="c " style="left:330.75px;top:59.1px;width:67px;text-align:right;">389.50</div>
<div class="c " style="left:0px;top:83.85px;width:41.7px;text-align:center;">3</div>
<div class="c " style="left:41.7px;top:83.85px;">科威特</div>
<div class="c " style="left:289px;top:83.85px;width:41.75px;text-align:center;">不限</div>
<div class="c " style="left:330.75px;top:83.85px;width:67px;text-align:right;">395.50</div>
<i class="sb" style="left:398.8px;top:30.5px;width:7px;height:43.8px;border-radius:3.5px"></i>
</div>
<div class="bt" style="left:932.2px;top:627.4px;width:32.6px;height:22.6px;line-height:23px">取消</div>
<div class="bt" style="left:970.6px;top:627.4px;width:32.6px;height:22.6px;line-height:23px;background:#1890ff;border-color:#1890ff;color:#fff">保存</div>
<!--TABLES-END-->
  </div>
  <div class="mf"></div>
</div>

<!--DLG-START-->
<div id="dlg">
  <div class="dt">提示</div>
  <svg class="abs" style="left:325.6px;top:16.2px" width="9.4" height="9.4" viewBox="0 0 9.4 9.4"><path d="M0.5 0.5L8.9 8.9M8.9 0.5L0.5 8.9" stroke="#7a7d84" stroke-width="1" fill="none"/></svg>
  <div class="dc">危害因素[岗前-生物因素]下，新增了血糖(空腹)、(迪)生化(黄<br>5ml)项目，是否添加</div>
  <div class="db" style="left:217.8px;width:61.2px">不添加</div>
  <div class="db pr" style="left:287.4px;width:49.6px">添加</div>
</div>
<!--DLG-END-->
</body>
</html>
